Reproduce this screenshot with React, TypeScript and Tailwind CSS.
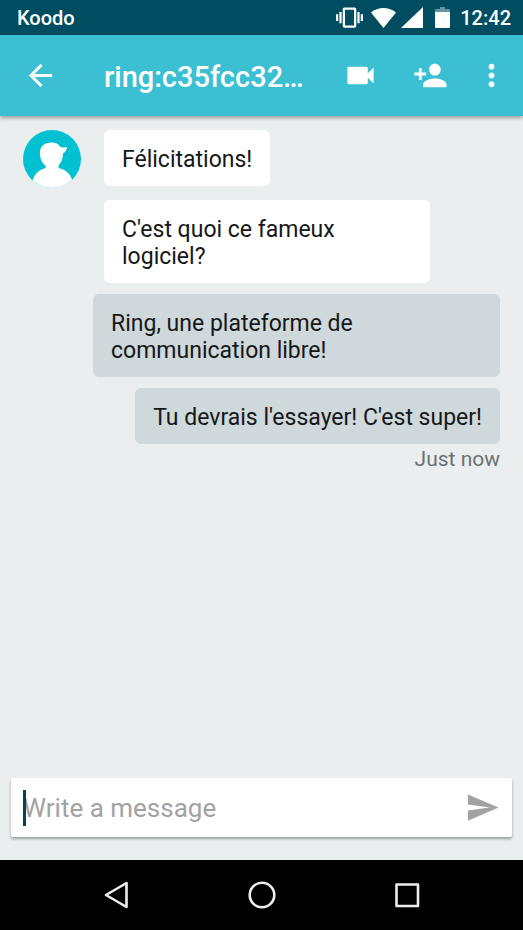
import type { ReactNode } from "react";

type IconProps = { d: string; className?: string };

function Icon({ d, className = "size-[35px]" }: IconProps) {
  return (
    <svg viewBox="0 0 24 24" fill="currentColor" className={className} aria-hidden="true">
      <path d={d} />
    </svg>
  );
}

const BACK = "M20 11H7.83l5.59-5.59L12 4l-8 8 8 8 1.41-1.41L7.83 13H20v-2z";
const VIDEO =
  "M17 10.5V7c0-.55-.45-1-1-1H4c-.55 0-1 .45-1 1v10c0 .55.45 1 1 1h12c.55 0 1-.45 1-1v-3.5l4 4v-11l-4 4z";
const PERSON_ADD =
  "M15 12c2.21 0 4-1.79 4-4s-1.79-4-4-4-4 1.79-4 4 1.79 4 4 4zm-9-2V7H4v3H1v2h3v3h2v-3h3v-2H6zm9 4c-2.67 0-8 1.34-8 4v2h16v-2c0-2.66-5.33-4-8-4z";
const MORE =
  "M12 8c1.1 0 2-.9 2-2s-.9-2-2-2-2 .9-2 2 .9 2 2 2zm0 2c-1.1 0-2 .9-2 2s.9 2 2 2 2-.9 2-2-.9-2-2-2zm0 6c-1.1 0-2 .9-2 2s.9 2 2 2 2-.9 2-2-.9-2-2-2z";
const SEND = "M2.01 21L23 12 2.01 3 2 10l15 2-15 2z";
const VIBRATE =
  "M0 15h2V9H0v6zm3 2h2V7H3v10zm19-8v6h2V9h-2zm-3 8h2V7h-2v10zM16.5 3h-9C6.67 3 6 3.67 6 4.5v15c0 .83.67 1.5 1.5 1.5h9c.83 0 1.5-.67 1.5-1.5v-15c0-.83-.67-1.5-1.5-1.5zM16 19H8V5h8v14z";

function StatusBar() {
  return (
    <div className="flex h-[35px] items-center justify-between bg-[#004d61] pr-3 pl-[17px] text-xl font-medium text-white">
      <span>Koodo</span>
      <div className="flex items-center">
        <Icon d={VIBRATE} className="mr-2 size-[27px]" />
        <svg viewBox="0 0 25 20" fill="currentColor" className="mr-[5px] h-5 w-[25px]" aria-hidden="true">
          <path d="M0 4.5C7 -1.5 18 -1.5 25 4.5L12.500 20z" />
        </svg>
        <svg viewBox="0 0 22 21" fill="currentColor" className="mr-3 h-[21px] w-[22px]" aria-hidden="true">
          <path d="M0 21L22 0v21z" />
        </svg>
        <svg viewBox="0 0 15 21" fill="currentColor" className="mr-[10px] h-[21px] w-[15px]" aria-hidden="true">
          <path d="M5 0h5v2h4q1 0 1 1v2H0V3q0-1 1-1h4z" opacity=".4" />
          <path d="M0 5h15v15q0 1-1 1H1q-1 0-1-1z" />
        </svg>
        <span>12:42</span>
      </div>
    </div>
  );
}

function Avatar() {
  return (
    <svg viewBox="0 0 58 58" className="size-[58px] shrink-0" role="img" aria-label="Contact">
      <defs>
        <clipPath id="avatar-disc">
          <circle cx="29" cy="29" r="29" />
        </clipPath>
      </defs>
      <g clipPath="url(#avatar-disc)">
        <path d="M0 0h58v58H0z" fill="#00c0d2" />
        <path
          d="M17 25C16 17 21 12.500 29 12.500C33 12.500 35 14 37 16.500C39 18 42 17.500 44 17C43.500 20 42 22.500 40 23.500C40 29 38 33 35.500 35.500V38C42 39.500 47 43 49 49.500L53 58H5L10 49.500C12 43 17 39.500 22.500 38V35.500C19 33 17.500 30 17 25z"
          fill="#fff"
        />
      </g>
    </svg>
  );
}

function Bubble({ own = false, children }: { own?: boolean; children: ReactNode }) {
  return (
    <p
      className={`rounded-md px-[18px] pt-4 pb-[13px] ${
        own ? "max-w-[407px] self-end bg-[#cfd8db]" : "max-w-[326px] self-start bg-white"
      }`}
    >
      {children}
    </p>
  );
}

export default function App() {
  return (
    <div className="flex min-h-screen flex-col bg-[#eaeeef] font-[Roboto,sans-serif]">
      <StatusBar />
      <header className="flex h-[81px] items-center bg-[#3abfd3] pr-[14px] pl-[23px] text-white shadow-[0_2px_4px_rgba(0,0,0,0.35)]">
        <button type="button" aria-label="Back">
          <Icon d={BACK} />
        </button>
        <h1 className="ml-[46px] min-w-0 flex-1 pt-0.5 text-[29px] leading-9 font-medium whitespace-nowrap">
          ring:c35fcc32…
        </h1>
        <div className="ml-4 flex items-center gap-[35px]">
          <button type="button" aria-label="Video call">
            <Icon d={VIDEO} />
          </button>
          <button type="button" aria-label="Add person">
            <Icon d={PERSON_ADD} />
          </button>
        </div>
        <button type="button" aria-label="More options" className="ml-[26px]">
          <Icon d={MORE} />
        </button>
      </header>

      <main className="flex flex-1 flex-col gap-[11px] px-[23px] pt-[14px] text-[23px] leading-[27px] text-[#151718]">
        <div className="flex items-start gap-[23px]">
          <Avatar />
          <div className="flex flex-1 flex-col gap-[14px]">
            <Bubble>Félicitations!</Bubble>
            <Bubble>C'est quoi ce fameux logiciel?</Bubble>
          </div>
        </div>
        <Bubble own>Ring, une plateforme de communication libre!</Bubble>
        <div className="flex flex-col">
          <Bubble own>Tu devrais l'essayer! C'est super!</Bubble>
          <time className="mt-0.5 self-end text-[21px] text-[#6c7072]">Just now</time>
        </div>
      </main>

      <form
        className="mx-[11px] mb-[23px] flex h-[59px] items-center rounded-xs bg-white pr-3 pl-3 shadow-[0_2px_3px_rgba(0,0,0,0.35)]"
        onSubmit={(event) => event.preventDefault()}
      >
        <div className="relative flex min-w-0 flex-1 items-center">
          <input
            type="text"
            aria-label="Write a message"
            placeholder="Write a message"
            className="h-9 w-full bg-transparent pt-0.5 text-[26px] text-[#151718] caret-[#004d61] outline-none placeholder:text-[#a2a2a2]"
          />
          <span className="absolute left-0 h-9 w-[3px] bg-[#004454]" />
        </div>
        <button type="submit" aria-label="Send" className="text-[#a2a2a2]">
          <Icon d={SEND} />
        </button>
      </form>

      <nav className="flex h-[70px] items-center justify-center gap-[110px] bg-black text-[#eeeeee]">
        <button type="button" aria-label="System back">
          <svg viewBox="0 0 36 36" fill="none" stroke="currentColor" strokeWidth="2.6" strokeLinejoin="round" className="size-9">
            <path d="M28.500 6v24L8 18z" />
          </svg>
        </button>
        <button type="button" aria-label="Home">
          <svg viewBox="0 0 36 36" fill="none" stroke="currentColor" strokeWidth="2.6" className="size-9">
            <circle cx="18" cy="18" r="12.300" />
          </svg>
        </button>
        <button type="button" aria-label="Recent apps">
          <svg viewBox="0 0 36 36" fill="none" stroke="currentColor" strokeWidth="2.6" strokeLinejoin="round" className="size-9">
            <path d="M6.500 7.500h21.500v21.500h-21.500z" />
          </svg>
        </button>
      </nav>
    </div>
  );
}
